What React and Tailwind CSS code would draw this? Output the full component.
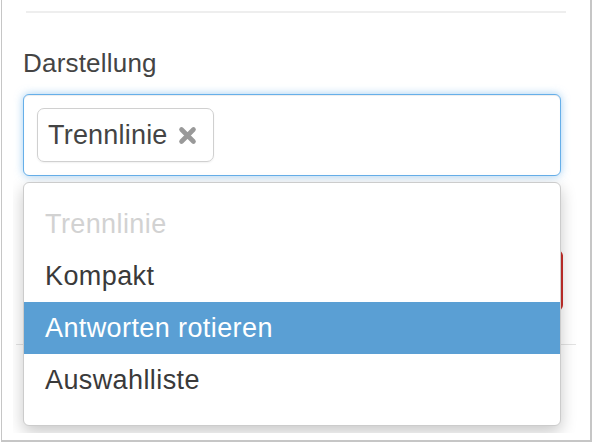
export default function App() {
  const options = [
    { label: "Trennlinie", disabled: true },
    { label: "Kompakt" },
    { label: "Antworten rotieren", active: true },
    { label: "Auswahlliste" },
  ];

  return (
    <div className="w-[594px] h-[446px] bg-white font-['Liberation_Sans',Arial,sans-serif]">
      {/* window frame */}
      <div className="ml-[1px] w-[591px] h-[442px] border-l border-r-2 border-b-2 border-[#c6c6c6] bg-white">
        <div className="relative mx-[11px] h-[433px] overflow-hidden bg-white">
          <div className="h-[11px]" />
          <div className="ml-[13px] w-[540px] border-t-2 border-[#eeeeee]" />

          {/* form group */}
          <div className="pl-[10px] pr-[18px]">
            <div className="mt-[35px] h-[30px] text-[26px] leading-[30px] tracking-[0.2px] text-[#444]">
              Darstellung
            </div>
            <div className="mt-[16px] h-[82px] rounded-[6px] border border-[#66afe9] bg-white pl-[13px] pt-[13px] shadow-[0_0_8px_rgba(102,175,233,0.6),inset_0_1px_1px_rgba(0,0,0,0.075)]">
              <div className="flex h-[54px] w-[177px] items-center rounded-[7px] border-[1.5px] border-[#d0d0d0] pl-[10px] pr-[16px] shadow-[0_1px_2px_rgba(0,0,0,0.06)]">
                <span className="text-[27px] leading-none tracking-[0.2px] text-[#444]">Trennlinie</span>
                <svg className="ml-auto" width="19" height="19" viewBox="0 0 19 19">
                  <path
                    d="M3.5 3.5 L15.5 15.5 M15.5 3.5 L3.5 15.5"
                    stroke="#999999"
                    strokeWidth="4.6"
                    strokeLinecap="round"
                  />
                </svg>
              </div>
            </div>
          </div>

          {/* content behind the open menu */}
          <div className="mt-[74px] flex justify-end pr-[16px]">
            <div className="h-[61px] w-[160px] rounded-[6px] bg-[#c9302c]" />
          </div>
          <div className="mx-[3px] mt-[33px] border-t border-[#e3e3e3]" />

          {/* dropdown menu */}
          <div className="absolute left-[10px] top-[182px] w-[538px] h-[244px] rounded-[6px] border border-[#cccccc] bg-white pt-[15px] pb-[20px] shadow-[0_6px_16px_rgba(0,0,0,0.22)]">
            {options.map((o) => (
              <div
                key={o.label}
                className={`flex h-[52px] items-center pl-[21px] text-[27px] leading-none tracking-[0.4px] ${
                  o.active
                    ? "bg-[#5a9fd4] text-white"
                    : o.disabled
                    ? "text-[#d2d2d2]"
                    : "text-[#3a3a3a]"
                }`}
              >
                {o.label}
              </div>
            ))}
          </div>
        </div>
      </div>
    </div>
  );
}
